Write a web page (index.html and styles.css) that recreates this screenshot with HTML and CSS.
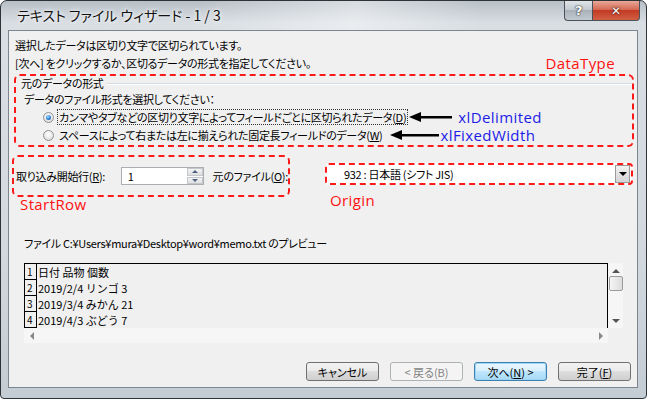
FILE: index.html
```html
<!DOCTYPE html>
<html lang="ja">
<head>
    <meta charset="UTF-8">
    <title>テキスト ファイル ウィザード - 1 / 3</title>
    <link rel="stylesheet" href="styles.css">
</head>
<body>
    <div class="window">
        <div class="titlebar">
            <span class="title">テキスト ファイル ウィザード - 1 / 3</span>
            <div class="caption-buttons">
                <span class="cap-btn help">?</span>
                <span class="cap-btn close">✕</span>
            </div>
        </div>

        <div class="client">
            <p class="intro first">選択したデータは区切り文字で区切られています。</p>
            <div class="intro-row">
                <p class="intro">[次へ] をクリックするか、区切るデータの形式を指定してください。</p>
                <span class="note red">DataType</span>
            </div>

            <!-- DataType -->
            <div class="mark type-box">
                <div class="legend">元のデータの形式</div>
                <div class="prompt">データのファイル形式を選択してください：</div>
                <div class="radio-row">
                    <span class="radio checked"></span>
                    <span class="radio-label focus">カンマやタブなどの区切り文字によってフィールドごとに区切られたデータ(<u>D</u>)</span>
                    <svg class="arrow arrow-1" width="43" height="12" viewBox="0 0 43 12">
                        <polygon points="0,6 12,1 12,11" fill="#000"/>
                        <rect x="11" y="5" width="32" height="2.5" fill="#000"/>
                    </svg>
                    <span class="note blue">xlDelimited</span>
                </div>
                <div class="radio-row">
                    <span class="radio"></span>
                    <span class="radio-label">スペースによって右または左に揃えられた固定長フィールドのデータ(<u>W</u>)</span>
                    <svg class="arrow arrow-2" width="49" height="12" viewBox="0 0 49 12">
                        <polygon points="0,6 12,1 12,11" fill="#000"/>
                        <rect x="11" y="5" width="38" height="2.5" fill="#000"/>
                    </svg>
                    <span class="note blue">xlFixedWidth</span>
                </div>
            </div>

            <div class="option-row">
                <div class="start-col">
                    <div class="mark start-box">
                        <span class="field-label">取り込み開始行(<u>R</u>):</span>
                        <div class="spin">
                            <span class="spin-value">1</span>
                            <span class="spin-btns">
                                <span class="spin-up"></span>
                                <span class="spin-down"></span>
                            </span>
                        </div>
                        <span class="field-label">元のファイル(<u>O</u>):</span>
                    </div>
                    <div class="note red start-note">StartRow</div>
                </div>
                <div class="origin-col">
                    <div class="mark combo">
                        <span class="combo-text">932 : 日本語 (シフト JIS)</span>
                        <span class="combo-btn"></span>
                    </div>
                    <div class="note red origin-note">Origin</div>
                </div>
            </div>

            <p class="preview-label">ファイル C:¥Users¥mura¥Desktop¥word¥memo.txt のプレビュー</p>
            <div class="preview">
                <div class="preview-body">
                    <div class="line"><span class="num">1</span><span class="data">日付 品物 個数</span></div>
                    <div class="line"><span class="num">2</span><span class="data">2019/2/4 リンゴ 3</span></div>
                    <div class="line"><span class="num">3</span><span class="data">2019/3/4 みかん 21</span></div>
                    <div class="line"><span class="num">4</span><span class="data">2019/4/3 ぶどう 7</span></div>
                </div>
                <div class="vscroll">
                    <span class="sb-arrow up"></span>
                    <span class="sb-thumb"></span>
                    <span class="sb-arrow down"></span>
                </div>
                <div class="hscroll">
                    <span class="sb-arrow left"></span>
                    <span class="sb-arrow right"></span>
                </div>
                <div class="corner"></div>
            </div>

            <div class="buttons">
                <button class="btn">キャンセル</button>
                <button class="btn" disabled>&lt; 戻る(B)</button>
                <button class="btn default">次へ(<u>N</u>) &gt;</button>
                <button class="btn">完了(<u>F</u>)</button>
            </div>
        </div>
    </div>
</body>
</html>
```

FILE: styles.css
```css
body {
    margin: 0;
    background-color: #fff;
    font-family: "Noto Sans CJK JP", sans-serif;
    font-size: 11px;
    letter-spacing: -0.3px;
    color: #000;
}
p {
    margin: 0;
}
u {
    text-decoration-thickness: 1px;
    text-underline-offset: 1px;
}

/* window frame */
.window {
    box-sizing: border-box;
    width: 647px;
    height: 399px;
    border: 1px solid #2e3338;
    border-radius: 7px 7px 4px 4px;
    padding: 0 8px 10px 7px;
    background: linear-gradient(180deg, #b7bfc7 0, #d9dee3 22px, #d3d9df 60%, #c4ccd4 100%);
    display: flex;
    flex-direction: column;
}
.titlebar {
    height: 29px;
    display: flex;
    justify-content: space-between;
    align-items: flex-start;
    background: linear-gradient(100deg, rgba(255,255,255,0) 30%, rgba(255,255,255,0.45) 55%, rgba(255,255,255,0) 75%);
}
.title {
    font-size: 14px;
    line-height: 28px;
    padding-left: 9px;
    letter-spacing: 0;
    font-feature-settings: "palt";
    color: #111;
    text-shadow: 0 0 6px #fff, 0 0 3px #fff;
}
.caption-buttons {
    display: flex;
    margin-right: -2px;
}
.cap-btn {
    box-sizing: border-box;
    height: 20px;
    display: flex;
    align-items: center;
    justify-content: center;
    border: 1px solid #4a525b;
    border-top: none;
    font-family: "DejaVu Sans", sans-serif;
    font-weight: bold;
    color: #fff;
}
.help {
    width: 28px;
    border-radius: 0 0 0 4px;
    border-right: none;
    font-size: 13px;
    background: linear-gradient(180deg, #dfe4e8 0, #c3cad1 45%, #a9b2bb 50%, #c2c9cf 100%);
    text-shadow: 0 0 1px #333, 0 0 1px #333, 0 0 2px #555;
}
.close {
    width: 48px;
    border-radius: 0 0 4px 0;
    font-size: 12px;
    background: linear-gradient(180deg, #e9a899 0, #d66a55 45%, #c23b24 50%, #d25f45 100%);
    text-shadow: 0 0 1px #5a1a10, 0 0 1px #5a1a10, 0 0 2px #5a1a10;
}

/* client area */
.client {
    flex: 1;
    border: 1px solid #7d868f;
    background-color: #f0f0f0;
    display: flex;
    flex-direction: column;
}
.intro {
    line-height: 18px;
    padding-left: 6px;
    font-feature-settings: "palt";
}
.intro.first {
    padding-top: 5px;
}
.intro-row {
    display: flex;
    justify-content: space-between;
    align-items: center;
    padding-right: 22px;
}

/* annotations */
.note {
    font-family: "Open Sans", sans-serif;
    font-size: 15px;
    letter-spacing: 0.4px;
    line-height: 18px;
}
.red {
    color: #ff1010;
}
.blue {
    color: #1d1de6;
}
.mark {
    box-sizing: border-box;
    border: 2px dashed #ff1a1a;
    border-radius: 6px;
}

/* data type group */
.type-box {
    height: 73px;
    margin: 2px 3px 0 5px;
}
.legend {
    display: flex;
    align-items: center;
    line-height: 15px;
    padding-left: 5px;
    font-feature-settings: "palt";
}
.legend::after {
    content: '';
    flex: 1;
    height: 1px;
    margin-left: 3px;
    margin-top: 1px;
    background-color: #d5dce2;
    border-bottom: 1px solid #fff;
}
.prompt {
    line-height: 17px;
    padding-left: 8px;
    font-feature-settings: "palt";
}
.radio-row {
    display: flex;
    align-items: center;
    height: 18px;
    padding-left: 27px;
    font-feature-settings: "palt";
}
.radio {
    box-sizing: border-box;
    position: relative;
    width: 11px;
    height: 11px;
    margin-right: 4px;
    border-radius: 50%;
    border: 1px solid #8f9193;
    background: radial-gradient(circle at 50% 35%, #fff 0, #e9e9e9 55%, #cfcfcf 100%);
}
.radio.checked::after {
    content: '';
    position: absolute;
    left: 2px;
    top: 2px;
    width: 5px;
    height: 5px;
    border-radius: 50%;
    background: radial-gradient(circle at 40% 35%, #a8dcff 0, #2b7fd8 55%, #0c3f8c 100%);
}
.radio-label {
    line-height: 14px;
    padding: 0 1px;
}
.radio-label.focus {
    outline: 1px dotted #333;
}
.arrow {
    flex: none;
}
.arrow-1 {
    margin: 0 6px 0 2px;
}
.arrow-2 {
    margin: 0 1px 0 7px;
}

/* start row / origin */
.option-row {
    display: flex;
    align-items: flex-start;
    margin-top: 8px;
}
.start-col {
    margin-left: 3px;
}
.start-box {
    width: 278px;
    height: 42px;
    display: flex;
    align-items: center;
    padding-left: 2px;
}
.field-label {
    font-feature-settings: "palt";
    white-space: nowrap;
}
.start-box .field-label:first-child {
    width: 105px;
}
.spin {
    box-sizing: border-box;
    width: 83px;
    height: 18px;
    margin-right: 9px;
    display: flex;
    border: 1px solid #abadb3;
    background-color: #fff;
}
.spin-value {
    flex: 1;
    padding-left: 6px;
    line-height: 16px;
}
.spin-btns {
    width: 16px;
    display: flex;
    flex-direction: column;
    gap: 1px;
}
.spin-up, .spin-down {
    flex: 1;
    display: flex;
    align-items: center;
    justify-content: center;
    background: linear-gradient(180deg, #f4f4f4, #dedede);
    border: 1px solid #c4c8cc;
}
.spin-up::after {
    content: '';
    border-left: 3px solid transparent;
    border-right: 3px solid transparent;
    border-bottom: 3px solid #4d6185;
}
.spin-down::after {
    content: '';
    border-left: 3px solid transparent;
    border-right: 3px solid transparent;
    border-top: 3px solid #4d6185;
}
.start-note {
    line-height: 14px;
    margin-left: 8px;
}
.origin-col {
    margin-left: 35px;
    margin-top: 8px;
}
.combo {
    width: 308px;
    height: 22px;
    border-radius: 4px;
    display: flex;
    align-items: center;
    background-color: #fff;
    padding: 1px 1px 1px 0;
}
.combo-text {
    flex: 1;
    padding-left: 17px;
    font-feature-settings: "palt";
}
.combo-btn {
    box-sizing: border-box;
    width: 15px;
    height: 18px;
    display: flex;
    align-items: center;
    justify-content: center;
    border: 1px solid #9a9a9a;
    background: linear-gradient(180deg, #f2f2f2, #d4d4d4);
}
.combo-btn::after {
    content: '';
    border-left: 4px solid transparent;
    border-right: 4px solid transparent;
    border-top: 4px solid #000;
}
.origin-note {
    line-height: 16px;
    margin: 7px 0 0 5px;
}

/* preview */
.preview-label {
    line-height: 18px;
    margin-top: 23px;
    padding-left: 15px;
    font-feature-settings: "palt";
}
.preview {
    display: grid;
    grid-template-columns: 584px 15px;
    grid-template-rows: 65px 15px;
    margin: 11px 0 0 15px;
}
.preview-body {
    border: 1px solid #000;
    border-bottom: none;
    overflow: hidden;
}
.line {
    display: flex;
    height: 16px;
}
.num {
    box-sizing: border-box;
    width: 12px;
    border-right: 1px solid #000;
    border-bottom: 1px solid #000;
    font-size: 10px;
    line-height: 16px;
    padding-left: 2px;
}
.data {
    padding-left: 1px;
    line-height: 16px;
    letter-spacing: 0;
    white-space: pre;
}
.vscroll, .hscroll {
    display: flex;
    align-items: center;
    justify-content: space-between;
    background-color: #f6f6f6;
}
.vscroll {
    flex-direction: column;
    padding: 6px 0 5px;
}
.hscroll {
    padding: 0 5px 0 6px;
}
.sb-thumb {
    box-sizing: border-box;
    width: 14px;
    height: 15px;
    margin-top: -26px;
    border: 1px solid #9c9c9c;
    border-radius: 2px;
    background: linear-gradient(90deg, #f5f5f5, #dcdcdc);
}
.sb-arrow.up {
    border-left: 4px solid transparent;
    border-right: 4px solid transparent;
    border-bottom: 4px solid #555;
}
.sb-arrow.down {
    border-left: 4px solid transparent;
    border-right: 4px solid transparent;
    border-top: 4px solid #555;
}
.sb-arrow.left {
    border-top: 4px solid transparent;
    border-bottom: 4px solid transparent;
    border-right: 4px solid #888;
}
.sb-arrow.right {
    border-top: 4px solid transparent;
    border-bottom: 4px solid transparent;
    border-left: 4px solid #888;
}
.corner {
    background-color: #f0f0f0;
}

/* buttons */
.buttons {
    margin-top: auto;
    display: flex;
    justify-content: flex-end;
    gap: 11px;
    padding: 0 6px 6px 0;
}
.btn {
    box-sizing: border-box;
    width: 73px;
    height: 19px;
    padding: 0;
    border: 1px solid #707070;
    border-radius: 3px;
    background: linear-gradient(180deg, #f2f2f2 0, #ebebeb 45%, #dddddd 50%, #cfcfcf 100%);
    font-family: "Noto Sans CJK JP", sans-serif;
    font-size: 11px;
    font-feature-settings: "palt";
    color: #000;
}
.btn:disabled {
    border-color: #adb2b5;
    background: #f4f4f4;
    color: #838383;
}
.btn.default {
    border-color: #3c7fb1;
    box-shadow: inset 0 0 0 1px #9fd6f5;
    background: linear-gradient(180deg, #eaf6fd 0, #d9f0fc 45%, #bee6fd 50%, #a7d9f5 100%);
}
```
